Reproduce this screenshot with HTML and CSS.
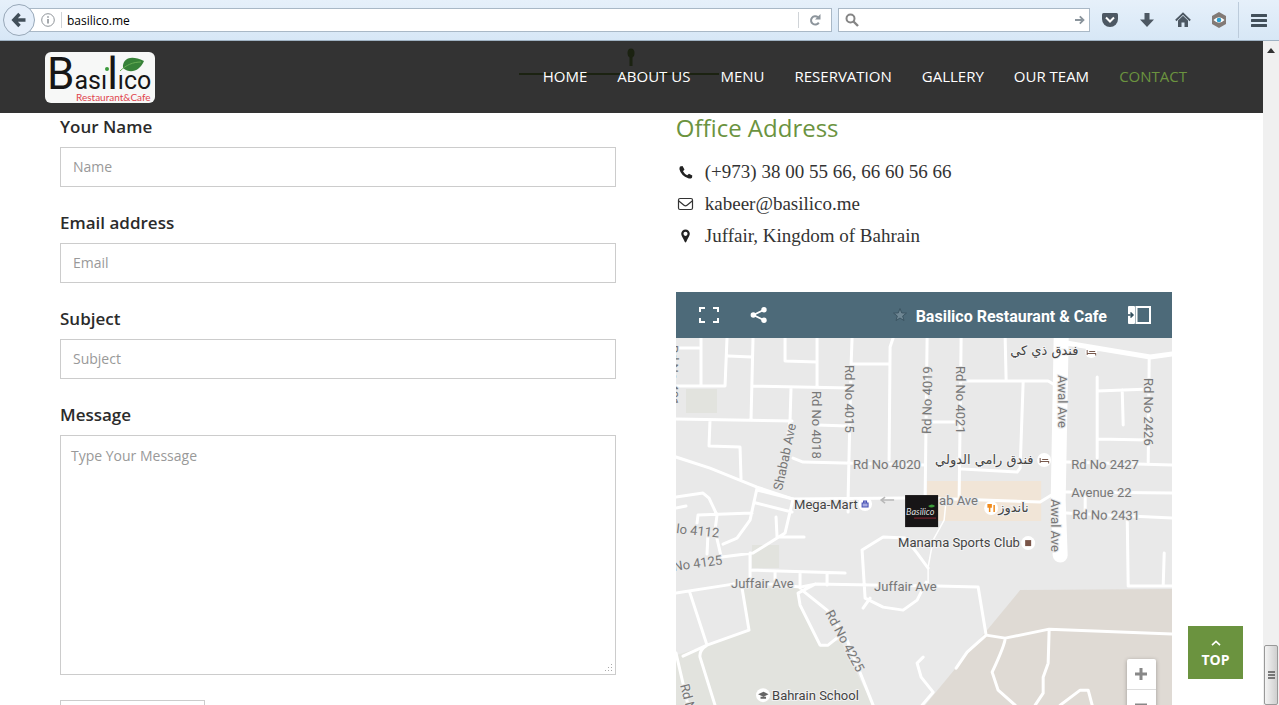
FILE: index.html
```html
<!DOCTYPE html>
<html lang="en">
<head>
<meta charset="utf-8">
<title>Basilico - Contact</title>
<link rel="stylesheet" href="styles.css">
</head>
<body>
<div class="toolbar">
  <button class="back" aria-label="Back">
    <svg width="16" height="16" viewBox="0 0 16 16"><path d="M8.5 2 2.8 8l5.700 6M3 8h11.500" fill="none" stroke="#424f5a" stroke-width="3.400"/></svg>
  </button>
  <div class="urlbar">
    <svg class="info" width="14" height="14" viewBox="0 0 14 14"><circle cx="7" cy="7" r="6.300" fill="none" stroke="#8f9499"/><path d="M7 6v4.500M7 3.200v1.600" stroke="#8f9499" stroke-width="1.600"/></svg>
    <input class="url" aria-label="Address" value="basilico.me">
    <button class="reload" aria-label="Reload">
      <svg width="14" height="14" viewBox="0 0 14 14"><path d="M10 4.200A4.200 4.200 0 1 0 10.800 9.600" fill="none" stroke="#8c949b" stroke-width="2"/><path d="M12.500 1v5.500H7z" fill="#8c949b"/></svg>
    </button>
  </div>
  <div class="search">
    <svg width="14" height="14" viewBox="0 0 14 14"><circle cx="5.500" cy="5.500" r="4" fill="none" stroke="#858585" stroke-width="2"/><path d="M8.500 8.500l4.500 4.500" stroke="#858585" stroke-width="2.400"/></svg>
    <input class="query" aria-label="Search">
    <svg width="10" height="10" viewBox="0 0 10 10"><path d="M0 5h8M4.800 1.300 8.500 5 4.800 8.700" fill="none" stroke="#8a949c" stroke-width="1.800"/></svg>
  </div>
  <div class="tools">
    <button aria-label="Pocket"><svg width="18" height="16" viewBox="0 0 18 16"><path d="M1 2.500Q1 1 2.500 1h13Q17 1 17 2.500V7a8 8 0 0 1-16 0z" fill="#4d5863"/><path d="M5 5.500 9 9.500l4-4" fill="none" stroke="#fff" stroke-width="2"/></svg></button>
    <button aria-label="Downloads"><svg width="16" height="16" viewBox="0 0 16 16"><path d="M5.500 1h5v6.500H15L8 15 1 7.500h4.500z" fill="#4d5863"/></svg></button>
    <button aria-label="Home"><svg width="16" height="16" viewBox="0 0 16 16"><path d="M.8 8.500 8 1.500l7.200 7" fill="none" stroke="#4d5863" stroke-width="1.800"/><path d="M3 8.500 8 3.800l5 4.700V15H9.500v-4.500h-3V15H3z" fill="#4d5863"/></svg></button>
    <button aria-label="Privacy add-on"><svg width="16" height="16" viewBox="0 0 16 16"><path d="M8 0l7 4v8l-7 4-7-4V4z" fill="#827a76"/><path d="M2.500 8Q8 2.500 13.500 8 8 13.500 2.500 8" fill="#fff"/><circle cx="8" cy="8" r="2.300" fill="#2c9fd0"/></svg></button>
    <button class="menu" aria-label="Menu"><svg width="16" height="13" viewBox="0 0 16 13"><path d="M1 1.500h14M1 6.500h14M1 11.500h14" stroke="#424f5a" stroke-width="3" stroke-linecap="round"/></svg></button>
  </div>
</div>

<div class="viewport">
  <div class="page">
    <header class="site-header">
      <a class="logo" href="#" aria-label="Basilico home">
        <svg width="110" height="51" viewBox="0 0 110 51">
          <rect width="110" height="51" rx="6" fill="#f7f8f7"/>
          <text class="logo-name" x="2" y="37"><tspan class="tall">B</tspan>ası<tspan class="tall">l</tspan>ıco</text>
          <circle cx="62" cy="17" r="2" fill="#3b9a3b"/>
          <path d="M78 16C77 7 85 2 99 9 95 18 86 23 78 16z" fill="#378238"/>
          <path d="M75 19C81 13 88 10 96 10" fill="none" stroke="#69ad55"/>
          <text class="logo-sub" x="31" y="49">Restaurant&amp;Cafe</text>
        </svg>
      </a>
      <svg class="ornament" width="200" height="30" viewBox="0 0 200 30"><path d="M0 26h200" stroke="#1b2211" stroke-width="2"/><path d="M112 4v14" stroke="#1b2211" stroke-width="3"/><ellipse cx="112" cy="5" rx="3.500" ry="4.500" fill="#1b2211"/></svg>
      <nav class="nav">
        <a href="#">HOME</a><a href="#">ABOUT US</a><a href="#">MENU</a><a href="#">RESERVATION</a><a href="#">GALLERY</a><a href="#">OUR TEAM</a><a class="active" href="#">CONTACT</a>
      </nav>
    </header>

    <main class="contact">
      <form class="form">
        <div class="field"><label for="name">Your Name</label><input id="name" placeholder="Name"></div>
        <div class="field"><label for="email">Email address</label><input id="email" type="email" placeholder="Email"></div>
        <div class="field"><label for="subject">Subject</label><input id="subject" placeholder="Subject"></div>
        <div class="field"><label for="message">Message</label><textarea id="message" placeholder="Type Your Message"></textarea></div>
        <button class="submit" type="submit" aria-label="Send message"></button>
      </form>

      <section class="office">
        <h2>Office Address</h2>
        <ul class="details">
          <li><svg width="20" height="18" viewBox="0 0 20 18"><path d="M4 3.500 6.500 3l2 3.500L7 8.300q1.500 2.700 4.200 4l1.800-1.600 3.300 1.900-.3 2.100q-1.500 1.300-3.800.6Q5 12.500 3.500 6.500 3.200 4.800 4 3.500z" fill="#222"/></svg>(+973) 38 00 55 66, 66 60 56 66</li>
          <li><svg width="20" height="18" viewBox="0 0 20 18"><rect x="2.500" y="3.500" width="14" height="11" rx="1.500" fill="none" stroke="#333" stroke-width="1.200"/><path d="M2.800 6 8 10.200q1.500 1.200 3 0L16.200 6" fill="none" stroke="#333" stroke-width="1.200"/></svg>kabeer@basilico.me</li>
          <li><svg width="20" height="18" viewBox="0 0 20 18"><path fill-rule="evenodd" d="M9.500 2.500a4.300 4.300 0 0 1 4.300 4.300c0 2-1.800 4-3.500 8q-.8 1.200-1.600 0c-1.700-4-3.500-6-3.500-8a4.300 4.300 0 0 1 4.300-4.300zm0 2.300a2 2 0 1 0 0 4.100 2 2 0 0 0 0-4.100z" fill="#222"/></svg>Juffair, Kingdom of Bahrain</li>
        </ul>
        <div class="map">
          <div class="map-bar">
            <button aria-label="Full screen"><svg width="20" height="16" viewBox="0 0 20 16"><path d="M1 5V1h5M14 1h5v4M19 11v4h-5M6 15H1v-4" fill="none" stroke="#fff" stroke-width="2"/></svg></button>
            <button class="share" aria-label="Share"><svg width="18" height="16" viewBox="0 0 18 16"><path d="M14 2.800 3.500 8 14 13.200" fill="none" stroke="#fff" stroke-width="1.800"/><circle cx="14" cy="2.800" r="2.700" fill="#fff"/><circle cx="3.300" cy="8" r="2.700" fill="#fff"/><circle cx="14" cy="13.200" r="2.700" fill="#fff"/></svg></button>
            <svg class="star" width="16" height="16" viewBox="0 0 16 16"><path d="M8 1.500l1.700 4.400 4.800.2-3.800 2.900 1.300 4.600-4-2.600-4 2.600 1.300-4.600L1.500 6.100l4.800-.2z" fill="#6f8794" stroke="#3c5563"/></svg>
            <span class="map-title">Basilico Restaurant &amp; Cafe</span>
            <button aria-label="Toggle legend"><svg width="23" height="18" viewBox="0 0 23 18"><rect width="7" height="18" rx="1" fill="#fff"/><path d="M8.500 1H22v16H8.500z" fill="none" stroke="#fff" stroke-width="2"/><path d="M0 9h4M2.500 6.500 5 9l-2.500 2.500" fill="none" stroke="#33505e" stroke-width="1.500"/></svg></button>
          </div>
          <div class="map-canvas">
            <svg class="streets" viewBox="676 338 496 367" preserveAspectRatio="xMidYMin slice">
              <rect x="676" y="338" width="496" height="367" fill="#e9e9e9"/>
              <path d="M686 389h31v24h-31zM752 545h27v23h-27z" fill="#e2e3de"/>
              <path d="M742 588h58v17l20 40 20-5 33 65H676v-50l31-10 42-15z" fill="#e2e3de"/>
              <path d="M1020 590l152-1v116H925z" fill="#dfdad4"/>
              <path d="M927 481h114v40H927z" fill="#f1e5d7"/>
              <g class="roads">
                <path d="M676 348h23M701 338v47M727 338l-2 48h-49M728 356l24 1M753 338l-2 81M785 338v23l32 1M817 338v49M752 386l98 2M791 387l-1 33M676 419l116 2M710 420l-1 26 31 1 1 32M852 338l-1 27-3 134v13M852 364h36M893 338l-3 9-1 113M817 425l31 1M790 420l-3 20M793 458l10 4 122 3M927 338l-2 161"/>
                <path d="M676 457l34 11 47 19 36 12 112-1h20l115 4 13-8"/>
                <path d="M676 497l27-4 6 5 8 17-2 15 6 26M676 508l10-2M757 488l-7 32-13 18-14 6M757 490l36 9M756 503l36 9M793 499l-8 34-32 20-31 4M776 517l1 20h27M697 523l1-8 54-2M708 533l-1 21M750 553v31M750 570l95 3M775 572v8M800 572v16M827 573v12"/>
                <path d="M676 593l57-9 19-2 48 5 15-3 115 2M690 593l17 52-24 11M707 645l42-15-7-42M707 645q-8 5-7 12l15 48M676 653l12 52M815 584l-17 9 2 12 20 40h8l10-8M802 590l25 20 20 30 26 65M862 550l21-13 22 1 12 15 11 15M862 550l3 48 18 9 20 3 14-10 9-18M870 598l-7 10M923 657l-6 6 4 14 12 15-11 13"/>
                <path d="M961 338l-2 160M1005 338l1 43M960 381h88l5 3M1023 382l-3 86-3 4-55-3M928 422h27M1097 377v81M1097 391l53-2M1122 390l1 35M1097 439l51 1M1149 357l-1 105M1066 462l106 3M1066 492l106 1M1066 513l106 5M1085 493v21M1127 516l1 70h44M1164 553l-1 32"/>
                <path d="M946 500l-2 20-11 20-5 27v20" stroke-width="1.500"/>
                <path d="M937 586l41 1 8 48-19 17-11 16M986 635l19 3 44-9 123 5M1005 638q0 6-13 34l6 18 17 15M1049 629l-1 34-5 14v16l-8 12M1060 705l20-15h8l4 15"/>
                <path class="avenue" d="M1061 338l-3 162 2 55"/>
                <path class="link" d="M1066 343l84 14 22-3"/>
              </g>
              <g class="road-names">
                <text x="853" y="469">Rd No 4020</text>
                <text x="1071" y="469">Rd No 2427</text>
                <text x="1071" y="497">Avenue 22</text>
                <text x="1072" y="519" transform="rotate(1 1072 519)">Rd No 2431</text>
                <text x="939" y="505">ab Ave</text>
                <text x="731" y="588">Juffair Ave</text>
                <text x="874" y="591">Juffair Ave</text>
                <text transform="translate(812 391) rotate(90)">Rd No 4018</text>
                <text transform="translate(845 365) rotate(90)">Rd No 4015</text>
                <text transform="translate(931 434) rotate(-89)">Rd No 4019</text>
                <text transform="translate(956 366) rotate(90)">Rd No 4021</text>
                <text transform="translate(1144 378) rotate(90)">Rd No 2426</text>
                <text transform="translate(1058 375) rotate(90)">Awal Ave</text>
                <text transform="translate(1051 499) rotate(90)">Awal Ave</text>
                <text transform="translate(782 491) rotate(-78)">Shabab Ave</text>
                <text transform="translate(825 613) rotate(62)">Rd No 4225</text>
                <text transform="translate(680 685) rotate(75)">Rd N</text>
                <text transform="translate(676 533) rotate(6)">lo 4112</text>
                <text transform="translate(674 571) rotate(-8)">No 4125</text>
                <text transform="translate(669 345) rotate(90)">Rd No 401</text>
              </g>
              <g fill="#fff"><circle cx="865" cy="504" r="7"/><circle cx="1028" cy="543" r="7"/><circle cx="1044" cy="460" r="7"/><circle cx="1091" cy="352" r="6"/><circle cx="991" cy="508" r="7"/><circle cx="763" cy="695" r="7"/></g>
              <path d="M862 503h6v4h-6zM863.500 503v-2h3v2" fill="#a5aae0" stroke="#4650b4"/>
              <path d="M1025 540h6v6h-6z" fill="#7a5548"/>
              <path d="M1040 458v5M1040 461.500h8.500v2M1042 459.500h6M1087 350v5M1087 353.500h8.500v2M1089 351.500h6" fill="none" stroke="#78594d"/>
              <path d="M988 504v3h3v-3M989.500 504v8M994 512v-7" fill="none" stroke="#f18b1c" stroke-width="1.500"/>
              <path d="M758 694l5.500-2.500 5 2.500-5 2.500zM760.500 696.500v2h5.500v-2" fill="#666"/>
              <path d="M881 500h13M885 497l-4 3 4 3" fill="none" stroke="#b8b8b8" stroke-width="1.500"/>
              <g class="places">
                <text x="794" y="509">Mega-Mart</text>
                <text x="898" y="547">Manama Sports Club</text>
                <text x="772" y="700">Bahrain School</text>
                <text class="arabic" x="1010" y="355">فندق ذي كي</text>
                <text class="arabic" x="935" y="464">فندق رامي الدولي</text>
                <text class="arabic" x="998" y="512">ناندوز</text>
              </g>
              <rect x="905" y="495" width="33" height="32" fill="#171516"/>
              <text class="pin" x="906" y="515">Basilico</text>
              <path d="M914 518h22" stroke="#8e2430"/>
              <path d="M928 506q4-3 7 0-4 3-7 0z" fill="#3d9c3a"/>
            </svg>
            <div class="zoom">
              <button aria-label="Zoom in"><svg width="12" height="12" viewBox="0 0 12 12"><path d="M0 6h12M6 0v12" stroke="#888" stroke-width="3"/></svg></button>
              <button aria-label="Zoom out"><svg width="12" height="12" viewBox="0 0 12 12"><path d="M0 6h12" stroke="#888" stroke-width="3"/></svg></button>
            </div>
          </div>
        </div>
      </section>
    </main>

    <a class="to-top" href="#"><svg width="10" height="6" viewBox="0 0 10 6"><path d="M1 5.200 5 1.400l4 3.800" fill="none" stroke="#fff" stroke-width="1.600"/></svg>TOP</a>
  </div>
  <div class="scrollbar" aria-hidden="true">
    <svg width="8" height="5" viewBox="0 0 8 5"><path d="M4 0l4 5H0z" fill="#333"/></svg>
    <div class="thumb"><svg width="7" height="8" viewBox="0 0 7 8"><path d="M0 1h7M0 4h7M0 7h7" stroke="#555" stroke-width="1.500"/></svg></div>
  </div>
</div>
</body>
</html>
```
FILE: styles.css
```css
* { box-sizing: border-box; }
body {
  margin: 0;
  height: 100vh;
  overflow: hidden;
  display: flex;
  flex-direction: column;
  background: #fff;
  color: #2b2b2b;
  font-family: "Open Sans", sans-serif;
}
button { padding: 0; border: 0; background: none; }
svg { display: block; flex: none; }

/* Browser toolbar */
.toolbar {
  flex: none;
  height: 41px;
  display: flex;
  align-items: center;
  padding: 0 12px 0 3px;
  background: linear-gradient(#e6f0fa, #d7e7f6);
  border-bottom: 1px solid #9fb2c3;
}
.back {
  width: 32px;
  height: 32px;
  margin-right: -6px;
  z-index: 1;
  display: grid;
  place-items: center;
  border: 1px solid #98a8b8;
  border-radius: 50%;
  background: #e4eefa;
}
.urlbar, .search {
  height: 24px;
  display: flex;
  align-items: center;
  background: #fff;
  border: 1px solid #a9b8c6;
}
.urlbar { flex: 790; padding-left: 11px; }
.search { flex: 240; margin-left: 6px; padding: 0 4px 0 6px; }
.toolbar input {
  flex: 1;
  min-width: 0;
  border: 0;
  padding: 0;
  outline: 0;
  background: none;
  font: 12px "Open Sans", sans-serif;
  color: #000;
}
.toolbar .url { height: 16px; margin-left: 6px; padding-left: 5px; border-left: 1px solid #d0d4d8; }
.reload {
  width: 33px;
  height: 16px;
  display: grid;
  place-items: center;
  border-left: 1px solid #d0d4d8;
}
.tools { display: flex; align-items: center; margin-left: 11px; gap: 20px; }
.tools .menu { height: 36px; padding-left: 12px; margin-left: -9px; border-left: 1px solid #bccbdb; }

/* Page */
.viewport { flex: 1; min-height: 0; display: flex; }
.page {
  flex: 1;
  position: relative;
  overflow: hidden;
  display: flex;
  flex-direction: column;
}
.site-header {
  flex: none;
  height: 72px;
  position: relative;
  display: flex;
  align-items: center;
  justify-content: space-between;
  padding: 0 76px 0 45px;
  background: #333;
}
.logo-name { font-family: Roboto, sans-serif; font-size: 25px; fill: #161616; }
.logo-name .tall { font-size: 44px; }
.logo-sub { font: 10px Lato, sans-serif; fill: #e0444c; }
.ornament { position: absolute; right: 544px; top: 7px; }
.nav { position: relative; display: flex; gap: 30px; padding-bottom: 2px; font-size: 15px; line-height: 24px; }
.nav a { color: #fff; text-decoration: none; }
.nav .active { color: #6b933f; }

.contact {
  flex: 1;
  min-height: 0;
  display: grid;
  grid-template-columns: 28fr 25fr;
  gap: 60px;
  padding: 0 91px 0 60px;
}
.form { min-height: 0; padding-top: 3px; }
.field { display: flex; flex-direction: column; gap: 9px; margin-bottom: 25px; }
.field label { font-size: 17px; line-height: 22px; font-weight: 600; }
.field input, .field textarea {
  width: 100%;
  border: 1px solid #ccc;
  background: #fff;
  color: #555;
  font: 14px/20px "Open Sans", sans-serif;
}
.field input { height: 40px; padding: 0 12px 2px; }
.field textarea { height: 240px; padding: 10px; }
.field textarea::-webkit-resizer {
  background:
    linear-gradient(#aaa, #aaa) 11px 5px / 1px 1px no-repeat,
    linear-gradient(#aaa, #aaa) 11px 8px / 1px 1px no-repeat,
    linear-gradient(#aaa, #aaa) 11px 11px / 1px 1px no-repeat,
    linear-gradient(#aaa, #aaa) 8px 8px / 1px 1px no-repeat,
    linear-gradient(#aaa, #aaa) 8px 11px / 1px 1px no-repeat,
    linear-gradient(#aaa, #aaa) 5px 11px / 1px 1px no-repeat;
}
.field ::placeholder { color: #999; }
.submit { width: 145px; height: 40px; border: 1px solid #ccc; }

.office { min-height: 0; display: flex; flex-direction: column; }
.office h2 { margin: 0 0 13px; font-size: 24px; line-height: 30px; font-weight: 400; color: #6b933f; }
.details { list-style: none; margin: 0 0 40px; padding: 0; color: #333; font: 19px/32px "Liberation Serif", serif; }
.details li { display: flex; align-items: center; gap: 9px; }

.map { flex: 1; min-height: 0; display: flex; flex-direction: column; }
.map-bar {
  flex: none;
  height: 46px;
  display: flex;
  align-items: center;
  padding: 0 21px 0 23px;
  background: #4d6a79;
  color: #fff;
}
.share { margin-left: 31px; }
.star { margin-left: auto; }
.map-title { margin: 2px 21px 0 8px; font: 700 16px Roboto, sans-serif; }
.map-canvas { flex: 1; min-height: 0; position: relative; overflow: hidden; }
.streets { width: 100%; height: 100%; font-family: Roboto, sans-serif; font-size: 13px; }
.roads { fill: none; stroke: #fff; stroke-width: 3; stroke-linejoin: round; stroke-linecap: round; }
.avenue { stroke-width: 15; }
.link { stroke-width: 5; }
.road-names { fill: #777; stroke: #e9e9e9; stroke-width: 2; paint-order: stroke; }
.places { fill: #444; stroke: #f2f2f2; stroke-width: 2; paint-order: stroke; }
.arabic { font-family: "DejaVu Sans", sans-serif; }
.pin { font: italic 9px Lato, sans-serif; fill: #ddd; }
.zoom {
  position: absolute;
  right: 16px;
  bottom: -14px;
  width: 29px;
  display: flex;
  flex-direction: column;
  background: #fff;
  border-radius: 2px;
  box-shadow: 0 1px 4px rgba(0, 0, 0, .3);
}
.zoom button { height: 30px; display: grid; place-items: center; }
.zoom button + button { border-top: 1px solid #ddd; }

.to-top {
  position: absolute;
  right: 20px;
  bottom: 26px;
  width: 55px;
  height: 53px;
  display: flex;
  flex-direction: column;
  align-items: center;
  justify-content: center;
  gap: 5px;
  padding-top: 4px;
  background: #6b933f;
  color: #fff;
  font-size: 14px;
  line-height: 18px;
  font-weight: 700;
  text-decoration: none;
}

.scrollbar {
  width: 16px;
  display: flex;
  flex-direction: column;
  align-items: center;
  justify-content: space-between;
  padding-top: 7px;
  background: #f0f0f0;
}
.thumb {
  width: 14px;
  height: 60px;
  display: grid;
  place-items: center;
  border: 1px solid #999;
  border-radius: 2px;
  background: linear-gradient(90deg, #f4f4f4, #cfcfcf);
}
```
